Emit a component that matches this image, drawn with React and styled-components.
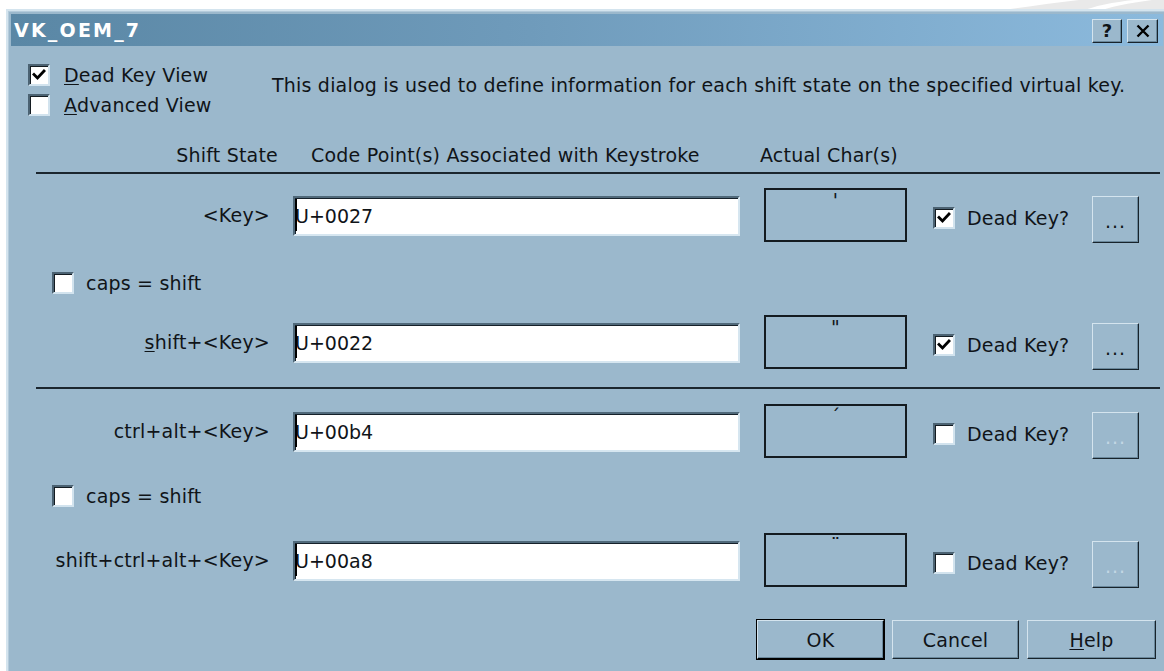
import React from 'react';
import styled, { createGlobalStyle } from 'styled-components';

const Global = createGlobalStyle`
  html, body { margin: 0; padding: 0; background: #fff; overflow: hidden; }
  body { font-family: "DejaVu Sans", Verdana, sans-serif; color: #101418; position: relative; }
`;

const face = '#9bb8cc';
const hi = '#d4e4ee';
const shadow = '#6a889c';
const dark = '#18232b';

const uiText = `
  font-family: "DejaVu Sans", Verdana, sans-serif;
  font-size: 19px;
  letter-spacing: 0.2px;
`;

/* faint wallpaper swirl peeking out above the dialog */
const Wallpaper = styled.svg`
  position: absolute;
  top: 0;
  right: 0;
  width: 180px;
  height: 12px;
  z-index: 0;
`;

const Window = styled.div`
  position: relative;
  z-index: 1;
  margin: 9px 0 0 6px;
  width: 1162px;
  height: 664px;
  box-sizing: border-box;
  border: 2px solid;
  border-color: ${hi} ${dark} ${dark} ${hi};
  padding: 3px;
  background: ${face};
  box-shadow: inset 1px 1px 0 #b4cbdb;
  display: flex;
  flex-direction: column;
`;

const TitleBar = styled.div`
  height: 32px;
  flex: none;
  display: flex;
  align-items: center;
  justify-content: space-between;
  padding: 0 5px 0 3px;
  background: linear-gradient(90deg, #5a87a5 0%, #6f9bbb 45%, #8cbadd 100%);
`;

const Title = styled.span`
  color: #fff;
  font-family: "DejaVu Sans", Verdana, sans-serif;
  font-weight: bold;
  font-size: 19px;
  letter-spacing: 2.2px;
`;

const CaptionButtons = styled.div`
  display: flex;
  gap: 5px;
  margin-top: 2px;
`;

const raised = `
  box-sizing: border-box;
  background: ${face};
  border: 1px solid;
  border-color: ${hi} ${dark} ${dark} ${hi};
  box-shadow: inset -1px -1px 0 ${shadow};
  color: #101418;
  padding: 0;
`;

const CaptionButton = styled.button`
  ${raised}
  width: ${p => p.$w}px;
  height: 24px;
  display: flex;
  align-items: center;
  justify-content: center;
  font-family: "DejaVu Sans", Verdana, sans-serif;
  font-weight: bold;
  font-size: 18px;
  line-height: 20px;
`;

const Client = styled.div`
  flex: 1;
  display: flex;
  flex-direction: column;
  padding: 16px 0 0 17px;
  ${uiText}
`;

const TopArea = styled.div`
  display: flex;
  align-items: flex-start;
`;

const ViewOptions = styled.div`
  width: 244px;
  display: flex;
  flex-direction: column;
  gap: 4px;
`;

const OptionRow = styled.label`
  display: flex;
  align-items: center;
  gap: 14px;
  height: 26px;
`;

const Box = styled.span`
  width: 22px;
  height: 22px;
  flex: none;
  box-sizing: border-box;
  background: #fff;
  border: 2px solid;
  border-color: #4b6272 #d2e3ee #d2e3ee #4b6272;
  box-shadow: inset 1px 1px 0 #141c22;
  display: flex;
  align-items: center;
  justify-content: center;
`;

const Mnemonic = styled.span`
  text-decoration: underline;
  text-underline-offset: 2px;
`;

const Description = styled.p`
  margin: 0;
  padding-top: 10px;
  line-height: 26px;
`;

const HeaderRow = styled.div`
  display: grid;
  grid-template-columns: 282px 467px auto;
  margin: 26px 0 0 -17px;
  line-height: 22px;
`;

const HeaderCell = styled.span`
  text-align: ${p => p.$align || 'left'};
  padding: ${p => p.$pad || '0'};
  white-space: nowrap;
`;

const Rule = styled.div`
  height: 2px;
  margin: ${p => p.$top}px 3px 0 8px;
  background: #1b262e;
`;

const Section = styled.div`
  display: flex;
  flex-direction: column;
`;

const KeyRow = styled.div`
  display: grid;
  grid-template-columns: 282px 471px 169px 159px 47px;
  align-items: center;
  height: 56px;
  margin-left: -17px;
  margin-top: ${p => p.$top}px;
`;

const StateLabel = styled.span`
  text-align: right;
  padding-right: 23px;
  white-space: nowrap;
`;

const FieldWrap = styled.div`
  position: relative;
  width: 447px;
  height: 40px;
  margin-top: 2px;
  &::after {
    content: '';
    position: absolute;
    left: 2px;
    top: 3px;
    bottom: 5px;
    width: 2px;
    background: #000;
  }
`;

const CodeInput = styled.input`
  width: 100%;
  height: 100%;
  box-sizing: border-box;
  margin: 0;
  border: 2px solid;
  border-color: #50697a #d6e6f0 #d6e6f0 #50697a;
  box-shadow: inset 1px 1px 0 #16212a;
  background: #fff;
  padding: 0;
  ${uiText}
  letter-spacing: 0;
  color: #101418;
  outline: none;
`;

const CharBox = styled.div`
  width: 143px;
  height: 54px;
  box-sizing: border-box;
  border: 2px solid #141b20;
  text-align: center;
  line-height: 19px;
  padding-top: 1px;
`;

const DeadKeyCell = styled.label`
  display: flex;
  align-items: center;
  gap: 12px;
  margin-top: 5px;
`;

const MoreButton = styled.button`
  ${raised}
  ${uiText}
  align-self: start;
  width: 47px;
  height: 47px;
  margin-top: 9px;
  padding-top: 2px;
  letter-spacing: 1px;
  color: ${p => (p.disabled ? '#c3d7e4' : '#101418')};
`;

const CapsRow = styled.label`
  display: flex;
  align-items: center;
  gap: 12px;
  height: 24px;
  margin: ${p => p.$top}px 0 0 24px;
`;

const Footer = styled.div`
  display: flex;
  justify-content: flex-end;
  gap: 8px;
  margin: 32px 7px 0 0;
`;

const PushButton = styled.button`
  ${raised}
  ${uiText}
  width: ${p => p.$w}px;
  height: 39px;
  ${p => p.$default && `outline: 1px solid #000; border-color: ${hi} #000 #000 ${hi};`}
`;

const Check = ({ on }) => (
  <Box>
    {on && (
      <svg width="14" height="14" viewBox="0 0 14 14">
        <path d="M2 6.5 L5.5 10 L12 3" fill="none" stroke="#000" strokeWidth="2.8" strokeLinecap="square" />
      </svg>
    )}
  </Box>
);

const CloseGlyph = () => (
  <svg width="16" height="14" viewBox="0 0 16 14">
    <path d="M2.5 1.5 L13.5 12.5 M13.5 1.5 L2.5 12.5" stroke="#000" strokeWidth="2.4" />
  </svg>
);

const CodeField = ({ value }) => (
  <FieldWrap>
    <CodeInput readOnly value={value} />
  </FieldWrap>
);

const KeyLine = ({ label, code, ch, dead, top }) => (
  <KeyRow $top={top}>
    <StateLabel>{label}</StateLabel>
    <CodeField value={code} />
    <CharBox>{ch}</CharBox>
    <DeadKeyCell>
      <Check on={dead} />
      Dead Key?
    </DeadKeyCell>
    <MoreButton disabled={!dead}>...</MoreButton>
  </KeyRow>
);

export default function App() {
  return (
    <>
      <Global />
      <Wallpaper viewBox="0 0 180 12" preserveAspectRatio="none">
        <path d="M0 12 C30 9 60 4 95 0 L180 0 L180 12 Z" fill="#e9e9e9" />
        <path d="M95 12 C110 6 130 2 150 0 L168 0 C145 3 125 7 112 12 Z" fill="#ffffff" />
      </Wallpaper>
      <Window>
        <TitleBar>
          <Title>VK_OEM_7</Title>
          <CaptionButtons>
            <CaptionButton $w={30}>?</CaptionButton>
            <CaptionButton $w={31}><CloseGlyph /></CaptionButton>
          </CaptionButtons>
        </TitleBar>
        <Client>
          <TopArea>
            <ViewOptions>
              <OptionRow>
                <Check on />
                <span><Mnemonic>D</Mnemonic>ead Key View</span>
              </OptionRow>
              <OptionRow>
                <Check />
                <span><Mnemonic>A</Mnemonic>dvanced View</span>
              </OptionRow>
            </ViewOptions>
            <Description>
              This dialog is used to define information for each shift state on the specified virtual key.
            </Description>
          </TopArea>
          <HeaderRow>
            <HeaderCell $align="right" $pad="0 15px 0 0">Shift State</HeaderCell>
            <HeaderCell $pad="0 0 0 18px">Code Point(s) Associated with Keystroke</HeaderCell>
            <HeaderCell>Actual Char(s)</HeaderCell>
          </HeaderRow>
          <Rule $top={6} />
          <Section>
            <KeyLine top={13} label="<Key>" code="U+0027" ch="'" dead />
            <CapsRow $top={28}>
              <Check />
              caps = shift
            </CapsRow>
            <KeyLine
              top={19}
              label={<><Mnemonic>s</Mnemonic>hift+&lt;Key&gt;</>}
              code="U+0022"
              ch={'"'}
              dead
            />
          </Section>
          <Rule $top={17} />
          <Section>
            <KeyLine top={14} label="ctrl+alt+<Key>" code="U+00b4" ch="´" />
            <CapsRow $top={25}>
              <Check />
              caps = shift
            </CapsRow>
            <KeyLine top={24} label="shift+ctrl+alt+<Key>" code="U+00a8" ch="¨" />
          </Section>
          <Footer>
            <PushButton $w={127} $default>OK</PushButton>
            <PushButton $w={127}>Cancel</PushButton>
            <PushButton $w={129}><Mnemonic>H</Mnemonic>elp</PushButton>
          </Footer>
        </Client>
      </Window>
    </>
  );
}
